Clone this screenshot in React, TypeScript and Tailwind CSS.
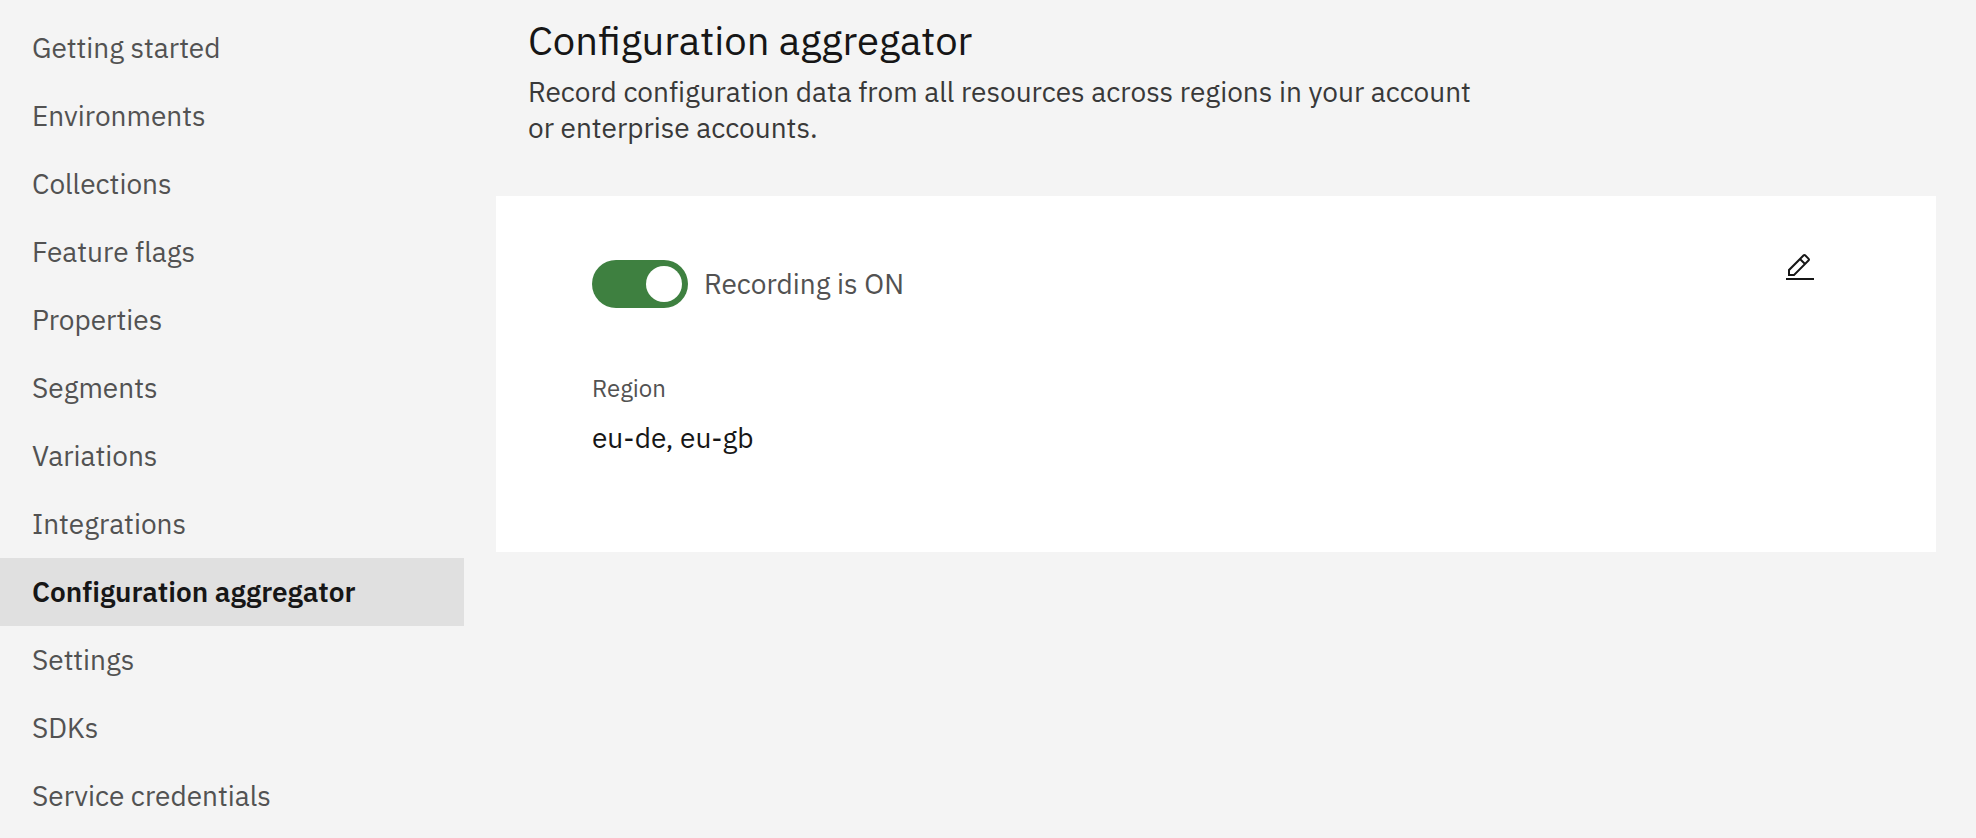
import { useState } from "react";

const navItems = [
  "Getting started",
  "Environments",
  "Collections",
  "Feature flags",
  "Properties",
  "Segments",
  "Variations",
  "Integrations",
  "Configuration aggregator",
  "Settings",
  "SDKs",
  "Service credentials",
];

function EditIcon() {
  return (
    <svg viewBox="0 0 32 32" className="size-8" fill="currentColor" aria-hidden="true">
      <path d="M2 26H30V28H2z" />
      <path d="M25.4 9c.8-.8.8-2 0-2.8l-3.6-3.6c-.8-.8-2-.8-2.8 0l-15 15V24h6.4L25.4 9zM20.4 4L24 7.6l-3 3L17.4 7 20.4 4zM6 22v-3.6l10-10 3.6 3.6-10 10H6z" />
    </svg>
  );
}

function SideNav({ active, onSelect }: { active: string; onSelect: (item: string) => void }) {
  return (
    <nav aria-label="Service navigation" className="w-[464px] shrink-0 pt-3.5">
      <ul>
        {navItems.map((item) => (
          <li key={item}>
            <a
              href="#"
              aria-current={item === active ? "page" : undefined}
              onClick={() => onSelect(item)}
              className={
                item === active
                  ? "flex h-17 items-center bg-[#e0e0e0] px-8 font-semibold text-[#161616]"
                  : "flex h-17 items-center px-8 text-[#525252]"
              }
            >
              {item}
            </a>
          </li>
        ))}
      </ul>
    </nav>
  );
}

export default function App() {
  const [active, setActive] = useState("Configuration aggregator");
  const [recording, setRecording] = useState(true);

  return (
    <div className="flex min-h-screen bg-[#f4f4f4] font-['IBM_Plex_Sans','Open_Sans',sans-serif] text-[28px] leading-9 text-[#161616] [font-variant-ligatures:none]">
      <SideNav active={active} onSelect={setActive} />
      <main className="min-w-0 flex-1 pt-4 pr-10 pl-8">
        <header className="px-8">
          <h1 className="text-[40px] leading-12 [font-variant-ligatures:normal]">Configuration aggregator</h1>
          <p className="mt-2.5 max-w-[968px] text-[#393939]">
            Record configuration data from all resources across regions in your account or enterprise accounts.
          </p>
        </header>
        <section className="mt-12.5 flex items-start justify-between bg-white px-24 pt-14 pb-24">
          <div className="pt-2">
            <label className="flex items-center gap-4 text-[#525252]">
              <input
                type="checkbox"
                role="switch"
                checked={recording}
                onChange={(event) => setRecording(event.target.checked)}
                className="h-12 w-24 appearance-none rounded-full bg-[#8d8d8d] p-1.5 before:block before:size-9 before:rounded-full before:bg-white checked:bg-[#3e8040] checked:before:ml-12"
              />
              Recording is {recording ? "ON" : "OFF"}
            </label>
            <dl className="mt-16">
              <dt className="text-2xl leading-8 text-[#525252]">Region</dt>
              <dd className="mt-4">eu-de, eu-gb</dd>
            </dl>
          </div>
          <button type="button" aria-label="Edit" className="mr-6">
            <EditIcon />
          </button>
        </section>
      </main>
    </div>
  );
}
